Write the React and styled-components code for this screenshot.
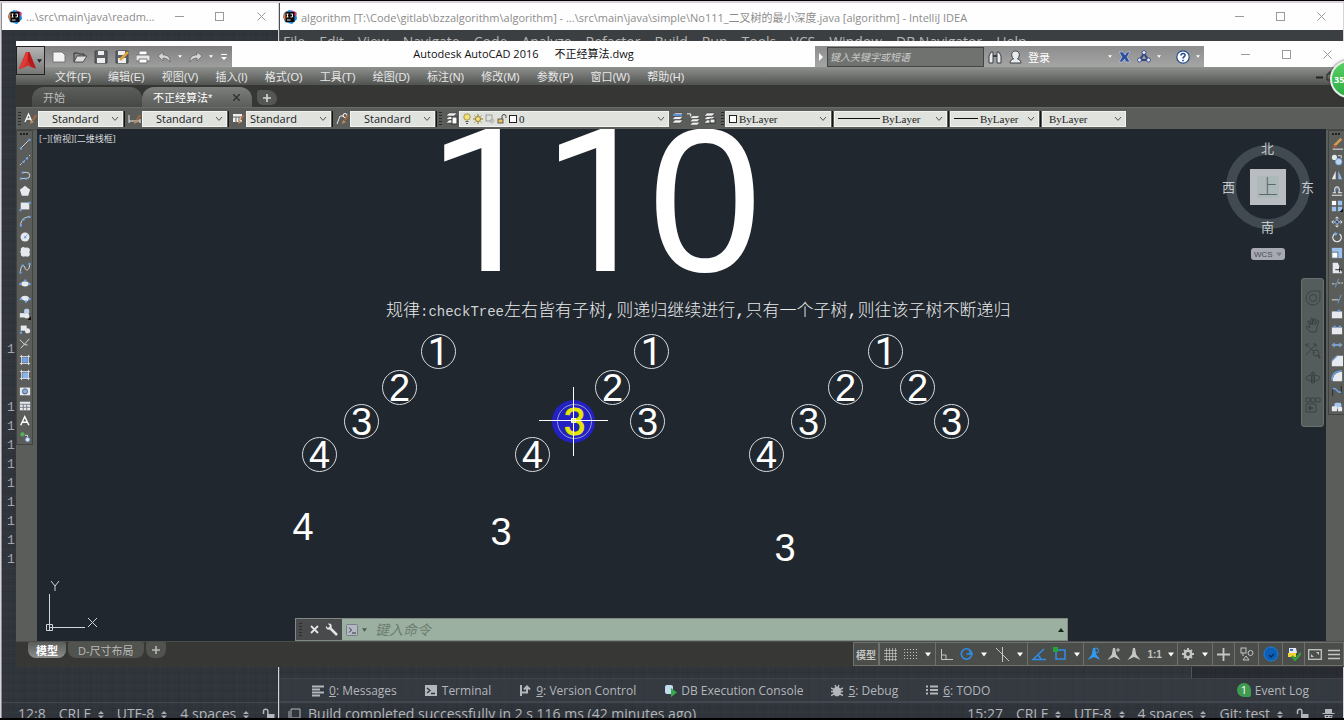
import React from 'react';
import styled, { createGlobalStyle } from 'styled-components';

const ui = '"Open Sans", "Noto Sans CJK SC", sans-serif';
const sans = '"Liberation Sans", "Noto Sans CJK SC", sans-serif';
const plainOne = 'Roboto, "Liberation Sans", sans-serif';
const serif = '"Liberation Serif", "Noto Sans CJK SC", serif';
const mono = '"Liberation Mono", "Noto Sans CJK SC", monospace';

const GlobalStyle = createGlobalStyle`
  * { box-sizing: border-box; }
  body { margin: 0; background: #000; }
  button, input, select { font: inherit; color: inherit; margin: 0; padding: 0; border: 0; background: none; border-radius: 0; }
  button { cursor: pointer; }
  svg { display: block; flex: none; }
`;

/* ---------- desktop and shared window parts ---------- */

const Desktop = styled.div`
  position: relative;
  min-height: 100vh;
  overflow: hidden;
  background: #d9d2dc;
  border-top: 1px solid #000;
  border-bottom: 2px solid #000;
  font-family: ${ui};
  font-size: 14px;
`;

const IdeWindow = styled.section`
  position: absolute;
  top: 2px;
  bottom: 0;
  left: ${(p) => p.$left}px;
  ${(p) => (p.$width ? `width: ${p.$width}px;` : 'right: 1px;')}
  display: flex;
  flex-direction: column;
  border-left: 1px solid ${(p) => (p.$width ? '#8b8d92' : '#4b4f56')};
  background-color: #30343b;
  background-image:
    repeating-linear-gradient(90deg, rgba(0, 0, 0, 0.06) 0 1px, transparent 1px 4px, rgba(120, 125, 140, 0.03) 4px 5px, transparent 5px 11px),
    repeating-linear-gradient(0deg, rgba(0, 0, 0, 0.05) 0 1px, transparent 1px 5px, rgba(120, 125, 140, 0.03) 5px 6px, transparent 6px 9px);
`;

const IdeTitleBar = styled.header`
  display: flex;
  align-items: center;
  height: 27px;
  padding: 0 1px 0 ${(p) => p.$inset}px;
  gap: 4px;
  background: #fefefe;
  color: #8c8c8c;
  font-size: 11px;
`;

const IdeTitle = styled.span`
  flex: 1;
  white-space: nowrap;
`;

const WindowButtonGroup = styled.div`
  display: flex;
  align-items: center;
`;

const WindowButton = styled.button`
  display: flex;
  align-items: center;
  justify-content: center;
  flex: none;
  width: 41px;
  height: 22px;
  color: #9a9a9a;
`;

const IdeMenuBar = styled.nav`
  display: flex;
  height: 23px;
  padding: 0 3px;
  gap: 14px;
  align-items: center;
  background: #3c3f41;
  color: #b4b6b8;
`;

const IdeBody = styled.div`
  flex: 1;
  min-height: 0;
  display: flex;
  justify-content: flex-end;
`;

const IdeSidePane = styled.aside`
  width: 152px;
  border-left: 1px solid #50555d;
  background: rgba(0, 0, 0, 0.15);
`;

const Gutter = styled.ol`
  flex: 1;
  list-style: none;
  margin: 0;
  padding: 310px 0 0 5px;
  font-family: ${mono};
  font-size: 13px;
  line-height: 19px;
  color: #a3a7ad;
  li:nth-child(2) { margin-top: 39px; }
`;

const IdeToolRow = styled.nav`
  display: flex;
  align-items: center;
  height: 24px;
  padding: 0 34px 0 32px;
  gap: 28px;
  border-top: 1px solid #3f444c;
  border-bottom: 1px solid #42474f;
  background: rgba(58, 63, 72, 0.5);
  color: #b3b6ba;
  font-size: 12px;
`;

const ToolWindowButton = styled.button`
  display: flex;
  align-items: center;
  gap: 4px;
  white-space: nowrap;
  margin-left: ${(p) => (p.$end ? 'auto' : '0')};
`;

const EventBadge = styled.span`
  width: 14px;
  height: 14px;
  border-radius: 7px 7px 2px 7px;
  background: #3f9b52;
  color: #fff;
  font-size: 11px;
  line-height: 14px;
  text-align: center;
`;

const IdeStatusBar = styled.footer`
  display: flex;
  height: 16px;
  padding: 0 8px 0 ${(p) => p.$padLeft}px;
  gap: 13px;
  align-items: flex-start;
  overflow: hidden;
  border-top: 1px solid #42474f;
  color: #b3b6ba;
`;

const StatusItem = styled.span`
  display: flex;
  align-items: center;
  gap: 7px;
  height: 22px;
  line-height: 22px;
  white-space: nowrap;
  ${(p) => p.$fill && 'flex: 1;'}
`;

/* ---------- CAD window ---------- */

const CadWindow = styled.section`
  position: absolute;
  inset: 40px 0 51px 16px;
  display: flex;
  flex-direction: column;
  background: #5b5d5a;
  color: #e8e8e8;
  font-size: 11px;
`;

const CadTitleBar = styled.header`
  display: flex;
  align-items: stretch;
  height: 26px;
  padding: 5px 0 0 29px;
  background: #fefefe;
  flex: none;
`;

const AppButton = styled.button`
  position: absolute;
  left: 0;
  top: 5px;
  width: 29px;
  height: 29px;
  display: flex;
  align-items: center;
  justify-content: center;
  gap: 1px;
  border: 1px solid #222;
  background: linear-gradient(#b4b4b4, #767876);
`;

const QuickAccess = styled.div`
  display: flex;
  align-items: center;
  width: 187px;
  padding: 0 4px 0 7px;
  justify-content: space-between;
  background: linear-gradient(#7f807f, #9d9e9d);
`;

const CadTitle = styled.h1`
  flex: 1;
  margin: 0;
  display: flex;
  justify-content: center;
  gap: 16px;
  color: #111;
  font-weight: 400;
  font-size: 11px;
  line-height: 16px;
  white-space: nowrap;
`;

const InfoCenter = styled.form`
  display: flex;
  align-items: center;
  width: 389px;
  background: linear-gradient(#8c8d8c, #a4a5a4);
  color: #fff;
`;

const InfoArrow = styled.button`
  width: 12px;
  height: 21px;
  display: flex;
  align-items: center;
  justify-content: center;
`;

const InfoInput = styled.input`
  width: 157px;
  height: 20px;
  padding: 0 2px;
  border: 1px solid #444;
  background: #707270;
  font-size: 10px;
  font-style: italic;
  &::placeholder { color: #c9cbc9; opacity: 1; }
`;

const InfoActions = styled.div`
  flex: 1;
  display: flex;
  align-items: center;
  padding: 0 4px;
  gap: 6px;
`;

const SignIn = styled.button`
  flex: 1;
  display: flex;
  align-items: center;
  gap: 5px;
`;

const IconButton = styled.button`
  display: flex;
  align-items: center;
  justify-content: center;
`;

const CadWindowButtons = styled.div`
  display: flex;
  width: 140px;
  padding-left: 21px;
  margin-top: -4px;
`;

const MenuBar = styled.nav`
  display: flex;
  align-items: center;
  height: 18px;
  flex: none;
  padding: 0 4px 0 39px;
  gap: 17px;
  background: linear-gradient(#8f918f, #515350);
  white-space: nowrap;
  font-family: ${sans};
`;

const DocControls = styled.span`
  margin-left: auto;
  padding-right: 6px;
`;

const FileTabs = styled.nav`
  display: flex;
  align-items: flex-end;
  height: 22px;
  flex: none;
  padding-left: 16px;
  background: #363735;
  font-family: ${sans};
`;

const FileTab = styled.button`
  display: flex;
  align-items: center;
  justify-content: space-between;
  width: 110px;
  height: 20px;
  padding: 0 12px 0 11px;
  border-radius: 12px 12px 0 0;
  background: ${(p) => (p.$active ? 'linear-gradient(#7d7f7c, #5b5d5a)' : 'linear-gradient(#5c5e5b, #464845)')};
  color: ${(p) => (p.$active ? '#fff' : '#bdbdbd')};
`;

const AddTab = styled.button`
  width: 20px;
  height: 15px;
  margin: 0 0 2px 5px;
  display: flex;
  align-items: center;
  justify-content: center;
  border-radius: 3px 9px 6px 6px;
  background: #555754;
  color: #d8d8d8;
`;

const PropertyBar = styled.div`
  display: flex;
  align-items: center;
  height: 22px;
  flex: none;
  padding: 0 1px;
  background: #5b5d5a;
  border-top: 1px solid #6a6c69;
`;

const Grip = styled.span`
  width: 3px;
  height: 13px;
  margin: 0 1px;
  background: repeating-linear-gradient(#2a2b2a 0 1px, transparent 1px 3px);
`;

const Divider = styled.span`
  width: 1px;
  height: 16px;
  margin: 0 1px;
  background: #151515;
`;

const StyleButton = styled.button`
  width: 16px;
  height: 16px;
  display: flex;
  align-items: center;
  justify-content: center;
`;

const Combo = styled.label`
  display: flex;
  align-items: center;
  width: ${(p) => p.$width}px;
  height: 16px;
  padding: 0 3px 0 ${(p) => p.$inset || 3}px;
  gap: 2px;
  background: #e0e2de;
  border: 1px solid #f2f3f1;
  color: #1d1d1d;
  font-family: ${(p) => (p.$serif ? serif : ui)};
  font-size: 11px;
`;

const ComboSelect = styled.select`
  appearance: none;
  flex: 1;
  min-width: 0;
  outline: none;
`;

const Swatch = styled.span`
  width: 8px;
  height: 8px;
  border: 1px solid #222;
  background: #fff;
  flex: none;
`;

const LineSample = styled.span`
  width: ${(p) => p.$width}px;
  height: 1px;
  background: #111;
  flex: none;
`;

const Spacer = styled.span`
  width: 3px;
`;

const Workspace = styled.div`
  flex: 1;
  min-height: 0;
  display: flex;
`;

const SidePanel = styled.aside`
  width: ${(p) => p.$width}px;
  padding-left: ${(p) => p.$inset}px;
  flex: none;
  overflow: hidden;
  background: #5b5d5a;
  border-top: 1px solid #484a47;
`;

const ToolStrip = styled.div`
  display: flex;
  flex-direction: column;
  align-items: center;
  justify-content: space-between;
  width: 17px;
  height: ${(p) => p.$height}px;
  padding: 2px 0 1px;
  border: 1px solid #414340;
`;

const StripGrip = styled.span`
  width: 9px;
  height: 2px;
  background: repeating-linear-gradient(90deg, #222 0 2px, transparent 2px 3px);
`;

const Canvas = styled.main`
  position: relative;
  flex: 1;
  min-width: 0;
  overflow: hidden;
  background: #20272e;
  color: #fff;
`;

const ViewLabel = styled.span`
  position: absolute;
  left: 2px;
  top: 3px;
  font-size: 9px;
  line-height: 14px;
  color: #d7d9db;
`;

const CanvasText = styled.div`
  position: absolute;
  left: ${(p) => p.$x}px;
  top: ${(p) => p.$y}px;
  transform: translate(-50%, -50%);
  font-family: ${(p) => (p.$plainOne ? plainOne : sans)};
  font-size: ${(p) => p.$size}px;
  line-height: 1;
  white-space: nowrap;
`;

const Rule = styled.p`
  position: absolute;
  left: 349px;
  top: 171px;
  margin: 0;
  font-family: ${mono};
  font-size: 17px;
  line-height: 24px;
  font-weight: 300;
  white-space: nowrap;
  color: #e8eaec;
`;

const Latin = styled.span`
  font-size: 14px;
  color: #cfd2d5;
`;

const Node = styled.div`
  position: absolute;
  left: ${(p) => p.$x - 18}px;
  top: ${(p) => p.$y - 18}px;
  width: 35px;
  height: 35px;
  border: 1px solid #d9dcde;
  border-radius: 50%;
  font-family: ${(p) => (p.children === 1 ? plainOne : sans)};
  font-size: 38px;
  line-height: 34px;
  text-align: center;
  color: ${(p) => (p.$hot ? '#e6e600' : '#fff')};
  ${(p) => p.$hot && 'background: #2222c4; box-shadow: -1px 0 0 4px #2222c4; border-color: #9c9ccf; -webkit-text-stroke: 1px #e6e600;'}
`;

const Overlay = styled.div`
  position: absolute;
  left: ${(p) => (p.$x === undefined ? 'auto' : `${p.$x}px`)};
  right: ${(p) => (p.$right === undefined ? 'auto' : `${p.$right}px`)};
  top: ${(p) => (p.$y === undefined ? 'auto' : `${p.$y}px`)};
  bottom: ${(p) => (p.$bottom === undefined ? 'auto' : `${p.$bottom}px`)};
`;

const Compass = styled.div`
  position: absolute;
  right: 16px;
  top: 16px;
  width: 84px;
  height: 84px;
  border: 10px solid #414a50;
  border-radius: 50%;
`;

const Bearing = styled.span`
  position: absolute;
  left: ${(p) => p.$x}px;
  top: ${(p) => p.$y}px;
  font-size: 13px;
  line-height: 14px;
  color: #c6c9cb;
`;

const CubeFace = styled.button`
  position: absolute;
  left: 14px;
  top: 14px;
  width: 36px;
  height: 36px;
  border: 7px solid #b9bcc0;
  background: #adb8b9;
  color: #5a676b;
  font-size: 20px;
  font-weight: 300;
  line-height: 22px;
`;

const WcsButton = styled.button`
  position: absolute;
  right: 41px;
  top: 119px;
  width: 34px;
  height: 12px;
  display: flex;
  align-items: center;
  justify-content: space-between;
  padding: 0 3px;
  border-radius: 3px;
  background: #a7aab3;
  color: #4a4d55;
  font-family: ${sans};
  font-size: 8px;
`;

const NavBar = styled.div`
  position: absolute;
  right: 2px;
  top: 149px;
  width: 23px;
  height: 149px;
  display: flex;
  flex-direction: column;
  align-items: center;
  justify-content: space-around;
  padding: 6px 0 8px;
  border: 1px solid #6a706f;
  border-radius: 3px;
  background: #555c5c;
  color: #3a4243;
`;

const CommandLine = styled.form`
  position: absolute;
  left: 258px;
  right: 258px;
  bottom: 0;
  height: 23px;
  display: flex;
  align-items: center;
  background: #9bb0a0;
  border: 1px solid #7f8a83;
`;

const CommandTools = styled.div`
  align-self: stretch;
  width: 46px;
  display: flex;
  align-items: center;
  justify-content: space-between;
  padding: 0 4px 0 2px;
  margin-right: 4px;
  background: #484a4b;
  color: #e3e3e3;
`;

const CommandInput = styled.input`
  flex: 1;
  min-width: 0;
  padding: 0 8px;
  outline: none;
  color: #26332a;
  font-size: 14px;
  font-style: italic;
  &::placeholder { color: #6c7d71; opacity: 1; }
`;

const CadStatus = styled.footer`
  display: flex;
  align-items: stretch;
  justify-content: space-between;
  height: 26px;
  flex: none;
  background: #373835;
  border-top: 1px solid #4c4e4b;
`;

const LayoutTabs = styled.nav`
  display: flex;
  align-items: flex-start;
  padding-left: 12px;
  gap: 2px;
`;

const LayoutTab = styled.button`
  height: 16px;
  padding: 0 ${(p) => p.$pad || 10}px;
  display: flex;
  align-items: center;
  border-radius: 2px 2px 8px 8px;
  background: ${(p) => (p.$active ? 'linear-gradient(#5b5d5a, #8b8d8a)' : '#51534f')};
  color: ${(p) => (p.$active ? '#fff' : '#b9bab8')};
  font-weight: ${(p) => (p.$active ? 600 : 400)};
`;

const StatusTools = styled.div`
  display: flex;
  width: 491px;
  margin-bottom: 1px;
`;

const StatusCell = styled.div`
  display: flex;
  align-items: center;
  justify-content: space-around;
  width: ${(p) => p.$width}px;
  flex: none;
  border: 1px solid #6f716e;
  border-left-width: ${(p) => (p.$joined ? 0 : 1)}px;
  background: #4b4d4a;
  color: #c4c6c3;
  font-family: ${sans};
  font-weight: ${(p) => (p.$bold ? 700 : 400)};
  font-size: 10px;
  white-space: nowrap;
`;

const RecorderBadge = styled.button`
  position: absolute;
  right: -24px;
  top: 59px;
  width: 38px;
  height: 38px;
  border: 2px solid #e6efe6;
  border-radius: 50%;
  background: linear-gradient(#58cf63, #2fae45);
  color: #fff;
  font-size: 9px;
  font-weight: 700;
  text-align: left;
  padding-left: 2px;
  box-shadow: 0 0 3px #333;
`;

/* ---------- icons ---------- */

const Svg = ({ w = 14, h = 14, vw, vh, children }) => (
  <svg width={w} height={h} viewBox={`0 0 ${vw || w} ${vh || h}`} fill="none" stroke="currentColor" aria-hidden="true">
    {children}
  </svg>
);

const Caret = ({ color = '#fff', size = 5 }) => (
  <svg width={size} height={size - 1} viewBox="0 0 6 4" aria-hidden="true"><path d="M0 0h6L3 4z" fill={color} /></svg>
);

const Chevron = () => (
  <Svg w={8} h={6}><path d="M1 1l3 3.4L7 1" stroke="#555" /></Svg>
);

const Updown = () => (
  <Svg w={6} h={9}><path d="M0 4L3 1l3 3zM0 5.500l3 3 3-3z" fill="#a9acb0" stroke="none" /></Svg>
);

const Plus = () => (
  <Svg w={8} h={8}><path d="M4 0v8M0 4h8" strokeWidth="1.600" /></Svg>
);

const IdeaLogo = () => (
  <svg width="14" height="14" viewBox="0 0 14 14" aria-hidden="true">
    <path d="M1 3L6 0l7 2 1 7-5 5-7-2-2-5z" fill="#1a87d8" />
    <path d="M0 7l3-6 5 3-4 9z" fill="#f0752a" />
    <path d="M8 0l6 3-2 4z" fill="#d93a78" />
    <rect x="2.500" y="2" width="9" height="10" fill="#0b0b0b" />
    <path d="M3.500 4h2M4.500 4v3M3.500 7h2M7.500 4h2v3h-2M4 10h3.500" stroke="#fff" strokeWidth=".9" fill="none" />
  </svg>
);

const Minimize = () => <Svg w={9} h={9}><path d="M0 4.500h9" /></Svg>;
const Maximize = () => <Svg w={10} h={10}><rect x=".5" y=".5" width="8" height="8" /></Svg>;
const Close = () => <Svg w={9} h={9}><path d="M.5.5l8 8M8.500.5l-8 8" /></Svg>;

const WindowButtons = () => (
  <WindowButtonGroup>
    <WindowButton type="button" aria-label="Minimize"><Minimize /></WindowButton>
    <WindowButton type="button" aria-label="Maximize"><Maximize /></WindowButton>
    <WindowButton type="button" aria-label="Close"><Close /></WindowButton>
  </WindowButtonGroup>
);

const Padlock = () => (
  <Svg w={13} h={13}>
    <path d="M1.500 6V3.500a2.200 2.200 0 0 1 4.400 0V6" strokeWidth="1.500" />
    <rect x="5" y="6" width="7.500" height="6" fill="#b3b6ba" stroke="none" />
  </Svg>
);

const Inspector = () => (
  <Svg w={13} h={13}>
    <path d="M3 5V1h7v4h2.500v1H.5V5zM2.500 7h8c0 4-2 6-4 6s-4-2-4-6z" fill="#b3b6ba" stroke="none" />
    <path d="M4 8.500h2M7.500 8.500h2" stroke="#2f343d" />
  </Svg>
);

const toolGlyphs = {
  messages: <path d="M0 2.500h12M0 5.500h8M0 8.500h12M0 11.500h8" strokeWidth="2" />,
  terminal: <><rect x="0" y="1" width="12" height="11" fill="#b3b6ba" stroke="none" /><path d="M2 4l3 2.500L2 9M6 9.500h4" stroke="#2f343d" strokeWidth="1.300" /></>,
  vcs: <path d="M2 1v11M2 8.500h6V3M5 5.500L8 2.500 11 5.500" strokeWidth="2" />,
  db: <><rect x="1" y="1" width="8" height="9" rx="2" fill="#c3dbef" stroke="none" /><path d="M7 4l6 4.500-6 4.500z" fill="#35a94b" stroke="none" /></>,
  debug: <><ellipse cx="6" cy="7.500" rx="4" ry="5" fill="#b3b6ba" stroke="none" /><path d="M0 4l3 1.500M12 4L9 5.500M0 7.500h12M0 11.500L3 10M12 11.500L9 10M4 1l1 2M8 1L7 3" strokeWidth="1.400" /></>,
  todo: <path d="M0 2.500h2M4 2.500h8M0 6h2M4 6h8M0 9.500h2M4 9.500h8" strokeWidth="1.800" />,
};

const W = '#e6e9ee';
const B = '#6ea4ea';

const Dots = ({ at }) => at.map(([x, y]) => (
  <rect key={`${x}-${y}`} x={x - 1} y={y - 1} width="2.500" height="2.500" fill={B} stroke="none" />
));

const drawTools = [
  ['Line', <><path d="M2.500 11.500l9-9" stroke={W} /><Dots at={[[2, 12], [12, 2]]} /></>],
  ['Construction line', <><path d="M1 13L13 1" stroke={W} strokeDasharray="3 2" /><Dots at={[[5, 9], [9, 5]]} /></>],
  ['Polyline', <><path d="M2 11h6M4 4h5a3 3 0 0 1 0 7" stroke={W} /><Dots at={[[2, 11], [8, 11], [4, 4]]} /></>],
  ['Polygon', <path d="M7 1l6 4.600-2.300 7H3.300L1 5.600z" fill={W} stroke="none" />],
  ['Rectangle', <><rect x="2" y="3" width="10" height="8" fill={W} stroke="none" /><Dots at={[[1.500, 11.500], [12, 3]]} /></>],
  ['Arc', <><path d="M2 12C2 6 6 2.500 12 2" stroke={W} /><Dots at={[[2, 12], [5, 5], [12, 2]]} /></>],
  ['Circle', <><circle cx="7" cy="7" r="5.200" fill={W} stroke="none" /><path d="M7 7l3-3" stroke={B} /><Dots at={[[7, 7]]} /></>],
  ['Revision cloud', <path d="M3 2q2-1.500 4 0 3-1 5 1 1.500 2 0 4 1.500 3-.5 5-2 1-4 0-2 1-4 0-2-1-1-3-2-3 0-4-1-2 .5-3z" fill={W} stroke="none" />],
  ['Spline', <><path d="M1.500 11C3 2 6 3 7 7s5 3 5.500-4" stroke={W} /><Dots at={[[1.500, 12], [4, 4], [12, 2]]} /></>],
  ['Ellipse', <><ellipse cx="7" cy="8" rx="4.500" ry="3" fill={W} stroke="none" /><Dots at={[[1.500, 8], [12, 8], [7, 4]]} /></>],
  ['Ellipse arc', <><path d="M2 8c0-5 10-5 10 0-1 3-4 3-4 3z" fill={W} stroke="none" /><Dots at={[[2, 8], [12, 8], [8, 11]]} /></>],
  ['Insert block', <><rect x="1" y="6" width="6" height="5" fill={W} stroke="none" /><rect x="6" y="1" width="6" height="6" rx="2" fill="#b9cfe9" stroke="none" /><circle cx="9" cy="9" r="3" fill={W} stroke="none" /><path d="M14 10v4h-4z" fill="#111" stroke="none" /></>],
  ['Create block', <><rect x="2" y="3" width="7" height="6" fill={W} stroke="none" /><circle cx="10" cy="9" r="3" fill={W} stroke="none" /><Dots at={[[2, 11]]} /></>],
  ['Point', <path d="M1 2l6 6M12 1L2 12M7 8h3" stroke={W} />],
  ['Hatch', <><rect x="4" y="4" width="6" height="6" fill={B} stroke="none" /><path d="M1 3h12M1 11h12M3 1v12M11 1v12" stroke={W} /></>],
  ['Gradient', <><rect x="4" y="4" width="7" height="7" fill="#88b4ee" stroke="none" /><path d="M1 3h12M1 11h12M3 1v12M11 1v12" stroke={W} /></>],
  ['Region', <><rect x="1" y="3" width="12" height="9" fill={W} stroke="none" /><circle cx="7" cy="7.500" r="3" fill="#86aede" stroke="#46566a" /></>],
  ['Table', <><rect x="1" y="2" width="12" height="10" fill={W} stroke="none" /><path d="M1 5h12M1 8.500h12M5 5v7M9 5v7" stroke="#6a6f78" /></>],
  ['Text', <path d="M2 12L6.700 2 11.500 12M4 8.500h6" stroke="#fff" strokeWidth="1.700" />],
  ['Add selected', <><circle cx="4" cy="4" r="2.500" fill="#53b552" stroke="none" /><circle cx="10" cy="10" r="2.500" fill={W} stroke={B} /><path d="M7 5h3v2" stroke={W} /></>],
];

const modifyTools = [
  ['Erase', <><path d="M4 9L12 1" stroke="#d79b50" strokeWidth="3" /><path d="M1 12l4-4 2 2z" fill="#cf5730" stroke="none" /><path d="M2 13h12" stroke="#fff" /></>],
  ['Copy', <><circle cx="4" cy="4" r="3" fill={W} stroke="none" /><circle cx="9" cy="9" r="3.800" fill="#bcd4f0" stroke={B} /><path d="M8 2h4v3" stroke={W} /></>],
  ['Mirror', <><path d="M5.500 2v10H1z" fill={W} stroke="none" /><path d="M8.500 2v10H13z" fill="#8fb8ea" stroke="none" /></>],
  ['Offset', <><path d="M1 12h12M2 9h3c-4-9 8-9 4 0h4" stroke={W} strokeWidth="1.300" /><path d="M5 8c-1-5 5-5 4 0" stroke={B} /></>],
  ['Array', <><path d="M1 1h5v5H1z" fill="#fff" stroke="none" /><path d="M8 1h5v5H8zM1 8h5v5H1zM8 8h5v5H8z" fill="#9dc1ef" stroke="none" /><path d="M14 10v4h-4z" fill="#111" stroke="none" /></>],
  ['Move', <><path d="M7 1v12M1 7h12M5 3l2-2 2 2M5 11l2 2 2-2M3 5L1 7l2 2M11 5l2 2-2 2" stroke={W} /><rect x="5.500" y="5.500" width="3" height="3" fill="#333" stroke={B} /></>],
  ['Rotate', <><path d="M5 3a5 5 0 1 0 5 .5" stroke={W} strokeWidth="1.400" /><path d="M4 1l4 2-3 3z" fill={B} stroke="none" /></>],
  ['Scale', <><rect x="1" y="1" width="12" height="12" fill="#9dc1ef" stroke="none" /><rect x="1" y="6" width="7" height="7" fill="#fff" stroke="#567" /></>],
  ['Stretch', <><path d="M2 1h6l5 12H2z" fill={W} stroke="none" /><path d="M5 9h8M10 6v6" stroke="#111" /></>],
  ['Trim', <><path d="M1 8h5M8 7h6" stroke={W} strokeDasharray="3 1" /><path d="M5 12l4-10" stroke={B} /></>],
  ['Extend', <><path d="M1 8h8" stroke={W} /><path d="M8 12l4-10" stroke={B} /></>],
  ['Break at point', <><rect x="1" y="4" width="12" height="8" fill={W} stroke="none" /><Dots at={[[9, 3]]} /></>],
  ['Break', <><rect x="1" y="4" width="12" height="8" fill={W} stroke="none" /><Dots at={[[4, 3], [10, 3]]} /></>],
  ['Join', <><path d="M1 7h12" stroke={W} /><path d="M3 4.500L6 7 3 9.500M11 4.500L8 7l3 2.500" fill={B} stroke={B} /></>],
  ['Chamfer', <><path d="M1 13V7l6-6h7v12z" fill={W} stroke="none" /><path d="M1 7l6-6" stroke={B} strokeWidth="1.500" /></>],
  ['Fillet', <><path d="M2 13C2 6 6 2 13 2v11z" fill={W} stroke="none" /><path d="M1 12C1 5 5 1 13 1" stroke={B} strokeWidth="1.500" /></>],
  ['Blend curves', <><path d="M2 13V4M12 1v9" stroke="#222" /><path d="M2 5c4-4 5 6 10 3" stroke={B} strokeWidth="1.500" /></>],
  ['Explode', <><rect x="4" y="2" width="8" height="7" rx="2" fill="#a9c7ee" stroke="none" /><rect x="1" y="6" width="6" height="6" rx="1" fill={W} stroke="none" /><rect x="8" y="7" width="5" height="5" rx="1" fill={W} stroke="none" /></>],
];

const quickTools = [
  ['New', <path d="M1 2h9l3 3v7H1z" fill="#f2f2f2" stroke="#666" strokeWidth=".8" />],
  ['Open', <><path d="M1 12V3h4l1 1h5v2" stroke="#333" /><path d="M1 12l3-6h10l-4 6z" fill="#e0e0e0" stroke="#333" strokeWidth=".8" /></>],
  ['Save', <><path d="M1 1h12v12H1z" fill="#5c6166" stroke="#43484d" /><path d="M4 1h6v4H4zM3 8h8v5H3z" fill="#eee" stroke="none" /></>],
  ['Save as', <><path d="M1 1h12v12H1z" fill="#5c6166" stroke="#43484d" /><path d="M3 1h7v4H3zM3 8h8v5H3z" fill="#eee" stroke="none" /><path d="M5 10l8-8" stroke="#e0a33a" strokeWidth="2.500" /></>],
  ['Plot', <><path d="M3 1h8v4H3z" fill="#fff" stroke="#777" /><path d="M0 5h14v6H0z" fill="#e6e6e6" stroke="#777" /><path d="M3 9h8v4H3z" fill="#fff" stroke="#777" /></>],
];

const pencil = <><path d="M9 8l3-5" stroke="#a5673c" strokeWidth="2" /><path d="M6 12l1-4 3 2z" fill="#c98a55" stroke="none" /></>;
const styleGlyphs = {
  text: <><path d="M1 10L4.500 2 8 10M2.500 7h4" stroke="#fff" strokeWidth="1.300" />{pencil}</>,
  dim: <><path d="M1 3v8M12 7v4M1 9h11" stroke="#e8e8e8" />{pencil}</>,
  table: <><path d="M1 2h9v8H1z" fill="#eee" stroke="none" /><path d="M1 5h9M4 5v5M7 5v5" stroke="#666" />{pencil}</>,
  leader: <><path d="M1 12L4 4h4" stroke="#e8e8e8" /><circle cx="9" cy="3.500" r="2" stroke="#fff" />{pencil}</>,
};

const layerStack = (extra) => (
  <><path d="M4 1h8L9 4H1zM4 4.500h8L9 7.500H1zM4 8h8l-3 3H1z" fill="#f0f0f0" stroke="#333" strokeWidth=".5" />{extra}</>
);

const navGlyphs = {
  wheel: <><circle cx="8" cy="8" r="3.500" /><path d="M1 8a7 7 0 0 1 7-7h7v7a7 7 0 0 1-14 0z" /></>,
  pan: <path d="M5 15l-4-5 1-1 3 2-2-7h1.500L6 8V1.500h1.500V8L9 2h1.500L10 8l2.500-4.500L14 4l-2 6-1 5z" />,
  zoom: <><path d="M1 1l9 9M11 1L1 12M1 4V1h3M8 1h3v3" /><circle cx="11" cy="10" r="3" /><path d="M13 12l2 3" strokeWidth="2" /></>,
  orbit: <><ellipse cx="8" cy="8" rx="7" ry="3" /><path d="M8 14V2M6 4l2-2.500L10 4M6.500 5v8M9.500 5v8" /></>,
  motion: <><path d="M1 1h4v4H1zM6 1h4v4H6zM11 1h4v4h-4zM1 7h10v8H1z" /><path d="M4 9l4 2-4 2z" fill="currentColor" /></>,
};

const person = (extra) => (
  <><path d="M6 1h2l1.200 6.500L13.500 13 7 10 .5 13l4.300-5.500z" fill="currentColor" stroke="none" />{extra}</>
);

/* ---------- content ---------- */

const ideMenus = ['File', 'Edit', 'View', 'Navigate', 'Code', 'Analyze', 'Refactor', 'Build', 'Run', 'Tools', 'VCS', 'Window', 'DB Navigator', 'Help'];
const cadMenus = ['文件(F)', '编辑(E)', '视图(V)', '插入(I)', '格式(O)', '工具(T)', '绘图(D)', '标注(N)', '修改(M)', '参数(P)', '窗口(W)', '帮助(H)'];

const toolWindows = [
  ['messages', '0', 'Messages'],
  ['terminal', '', 'Terminal'],
  ['vcs', '9', 'Version Control'],
  ['db', '', 'DB Execution Console'],
  ['debug', '5', 'Debug'],
  ['todo', '6', 'TODO'],
];

const nodes = [
  [402, 223, 1], [363, 259, 2], [325, 293, 3], [283, 326, 4],
  [615, 223, 1], [576, 259, 2], [611, 293, 3], [496, 326, 4],
  [849, 223, 1], [809, 259, 2], [881, 259, 2], [772, 293, 3], [915, 293, 3], [730, 326, 4],
];

const Select = ({ label, value, width, inset, serifText, before }) => (
  <Combo $width={width} $inset={inset} $serif={serifText}>
    {before}
    <ComboSelect aria-label={label} defaultValue={value}>
      <option>{value}</option>
    </ComboSelect>
    <Chevron />
  </Combo>
);

const Encoding = () => (
  <>
    <StatusItem>CRLF <Updown /></StatusItem>
    <StatusItem>UTF-8 <Updown /></StatusItem>
    <StatusItem>4 spaces <Updown /></StatusItem>
  </>
);

const ReadmeWindow = () => (
  <IdeWindow $left={1} $width={277}>
    <IdeTitleBar $inset={6}>
      <IdeaLogo />
      <IdeTitle>...\src\main\java\readm...</IdeTitle>
      <WindowButtons />
    </IdeTitleBar>
    <IdeBody>
      <Gutter>{Array.from({ length: 10 }, (_, i) => <li key={i}>1</li>)}</Gutter>
    </IdeBody>
    <IdeStatusBar $padLeft={16}>
      <StatusItem>12:8</StatusItem>
      <Encoding />
      <StatusItem><Padlock /></StatusItem>
    </IdeStatusBar>
  </IdeWindow>
);

const ProjectWindow = () => (
  <IdeWindow $left={279}>
    <IdeTitleBar $inset={3}>
      <IdeaLogo />
      <IdeTitle>algorithm [T:\Code\gitlab\bzzalgorithm\algorithm] - ...\src\main\java\simple\No111_二叉树的最小深度.java [algorithm] - IntelliJ IDEA</IdeTitle>
      <WindowButtons />
    </IdeTitleBar>
    <IdeMenuBar>{ideMenus.map((m) => <button key={m}>{m}</button>)}</IdeMenuBar>
    <IdeBody><IdeSidePane /></IdeBody>
    <IdeToolRow>
      {toolWindows.map(([icon, key, name]) => (
        <ToolWindowButton key={name}>
          <Svg w={13} h={13}>{toolGlyphs[icon]}</Svg>
          <span>{key && <><u>{key}</u>: </>}{name}</span>
        </ToolWindowButton>
      ))}
      <ToolWindowButton $end><EventBadge>1</EventBadge>Event Log</ToolWindowButton>
    </IdeToolRow>
    <IdeStatusBar $padLeft={8}>
      <StatusItem $fill>
        <Svg w={13} h={13}><path d="M3 1h9v9H3zM1 3v9h9" /></Svg>
        Build completed successfully in 2 s 116 ms (42 minutes ago)
      </StatusItem>
      <StatusItem>15:27</StatusItem>
      <Encoding />
      <StatusItem>Git: test <Updown /></StatusItem>
      <StatusItem><Padlock /></StatusItem>
      <StatusItem><Inspector /></StatusItem>
    </IdeStatusBar>
  </IdeWindow>
);

const TitleBar = () => (
  <CadTitleBar>
    <AppButton aria-label="Application menu">
      <Svg w={17} h={18}>
        <path d="M7 0h3.500L17 16.500 12 15 8.500 8.500 5 15.500 0 17z" fill="#b81a1a" stroke="none" />
        <path d="M7 0h2L8.500 8.500 5 15.500 0 17z" fill="#e23a34" stroke="none" />
        <path d="M8.500 8.500l3.500 6.500-3.500-1.500L5 15.500z" fill="#d32a28" stroke="none" />
      </Svg>
      <Caret color="#222" />
    </AppButton>
    <QuickAccess>
      {quickTools.map(([name, glyph]) => (
        <IconButton key={name} aria-label={name}><Svg>{glyph}</Svg></IconButton>
      ))}
      <IconButton aria-label="Undo"><Svg w={13} h={12}><path d="M0 5l5-4v3c5 0 7 2 7 7-2-3-4-4-7-4v3z" fill="#d5d7d9" stroke="#555" strokeWidth=".6" /></Svg></IconButton>
      <Caret size={4} />
      <IconButton aria-label="Redo"><Svg w={13} h={12}><path d="M13 5L8 1v3C3 4 1 6 1 11c2-3 4-4 7-4v3z" fill="#d5d7d9" stroke="#555" strokeWidth=".6" /></Svg></IconButton>
      <Caret size={4} />
      <IconButton aria-label="Customize"><Svg w={8} h={8}><path d="M1 1.500h6" stroke="#fff" /><path d="M1 4h6L4 7z" fill="#fff" stroke="none" /></Svg></IconButton>
    </QuickAccess>
    <CadTitle><span>Autodesk AutoCAD 2016</span><span>不正经算法.dwg</span></CadTitle>
    <InfoCenter>
      <InfoArrow type="button" aria-label="Collapse search"><Svg w={5} h={8}><path d="M0 0l4 4-4 4z" fill="#fff" stroke="none" /></Svg></InfoArrow>
      <InfoInput aria-label="Search" placeholder="键入关键字或短语" />
      <InfoActions>
        <IconButton type="button" aria-label="Find"><Svg><path d="M1 13V6l2-4h2v11zM13 13V6l-2-4H9v11z" fill="#e9ecef" stroke="#3b3f44" /><path d="M5 6h4" stroke="#3b3f44" strokeWidth="2" /></Svg></IconButton>
        <SignIn type="button"><Svg w={15}><path d="M2 13c0-3 2-3.500 3.500-4C2 5 4 1 7.500 1s5.500 4 2 8c1.500.5 3.500 1 3.500 4z" fill="#e9ecef" stroke="#3b3f44" /></Svg>登录</SignIn>
        <Caret size={4} />
        <IconButton type="button" aria-label="Exchange"><Svg w={13} h={12}><path d="M1 1h4l2 3 2-3h3L9 6l3 5H8L6.500 8 4 11H1l3-5z" fill="#2c4d9b" stroke="#b9c8ec" strokeWidth=".7" /></Svg></IconButton>
        <IconButton type="button" aria-label="Stay connected"><Svg w={14} h={13}><path d="M7 3L3 10h8z" stroke="#2e447e" strokeWidth="2" /><g fill="#dfe6f5" stroke="#2e447e" strokeWidth=".8"><circle cx="7" cy="2.500" r="2" /><circle cx="2.500" cy="10" r="2" /><circle cx="11.500" cy="10" r="2" /></g></Svg></IconButton>
        <Caret size={4} />
        <Spacer />
        <IconButton type="button" aria-label="Help"><Svg><circle cx="7" cy="7" r="6.200" fill="#fff" stroke="#234a8c" strokeWidth="1.200" /><path d="M5 5.500c0-3 4.500-2.500 4 0-.3 1.200-2 1.200-2 3M7 9.800v1.500" stroke="#234a8c" strokeWidth="1.600" /></Svg></IconButton>
        <Caret size={4} />
      </InfoActions>
    </InfoCenter>
    <CadWindowButtons><WindowButtons /></CadWindowButtons>
  </CadTitleBar>
);

const Properties = () => (
  <PropertyBar>
    <Grip />
    <StyleButton aria-label="Text style"><Svg w={13} h={13}>{styleGlyphs.text}</Svg></StyleButton>
    <Select label="Text style" value="Standard" width={85} inset={13} />
    <Divider />
    <StyleButton aria-label="Dimension style"><Svg w={13} h={13}>{styleGlyphs.dim}</Svg></StyleButton>
    <Select label="Dimension style" value="Standard" width={85} inset={13} />
    <Divider />
    <StyleButton aria-label="Table style"><Svg w={13} h={13}>{styleGlyphs.table}</Svg></StyleButton>
    <Select label="Table style" value="Standard" width={85} />
    <Divider />
    <StyleButton aria-label="Multileader style"><Svg w={13} h={13}>{styleGlyphs.leader}</Svg></StyleButton>
    <Select label="Multileader style" value="Standard" width={85} inset={13} />
    <Divider />
    <Grip />
    <StyleButton aria-label="Layer properties"><Svg w={13} h={13}>{layerStack(<rect x="7" y="5" width="5" height="7" fill="#fff" stroke="#333" />)}</Svg></StyleButton>
    <Select
      label="Layer"
      value="0"
      width={210}
      serifText
      before={(
        <>
          <Svg w={8} h={12}><circle cx="4" cy="4" r="3.200" fill="#f6e27a" stroke="#8d7a2b" strokeWidth=".7" /><path d="M2.500 8.500h3M3 10.500h2" stroke="#555" /></Svg>
          <Svg w={10} h={10}><circle cx="5" cy="5" r="2.500" fill="#f6e27a" stroke="#8d7a2b" /><path d="M5 0v2M5 8v2M0 5h2M8 5h2M1.500 1.500l1 1M8.500 1.500l-1 1M1.500 8.500l1-1M8.500 8.500l-1-1" stroke="#8d7a2b" /></Svg>
          <Svg w={10} h={10}><rect x="1" y="1" width="6" height="6" stroke="#9a9c99" /><circle cx="7" cy="7" r="2" stroke="#b0b2af" /></Svg>
          <Svg w={10} h={10}><rect x="1" y="5" width="5" height="4" fill="#e8c25a" stroke="#444" strokeWidth=".8" /><path d="M5 5V2.500a2 2 0 0 1 4 0V4" stroke="#444" /></Svg>
          <Swatch />
        </>
      )}
    />
    <StyleButton aria-label="Make layer current"><Svg w={13} h={13}>{layerStack(<path d="M2 3h9" stroke="#5d8fd6" strokeWidth="2" />)}</Svg></StyleButton>
    <StyleButton aria-label="Previous layer"><Svg w={13} h={13} vw={14} vh={14}><g transform="translate(2 3)">{layerStack(<path d="M-2-1h4v3" stroke="#fff" />)}</g></Svg></StyleButton>
    <StyleButton aria-label="Layer states"><Svg w={13} h={13}>{layerStack(<rect x="7" y="7" width="5" height="4" fill="#eee" stroke="#333" />)}</Svg></StyleButton>
    <Spacer />
    <Grip />
    <Select label="Color" value="ByLayer" width={106} serifText before={<Swatch />} />
    <Divider />
    <Select label="Linetype" value="ByLayer" width={113} serifText before={<LineSample $width={42} />} />
    <Divider />
    <Select label="Lineweight" value="ByLayer" width={89} serifText before={<LineSample $width={24} />} />
    <Divider />
    <Select label="Plot style" value="ByLayer" width={84} inset={6} serifText />
  </PropertyBar>
);

const Tools = ({ items, height }) => (
  <ToolStrip $height={height}>
    <StripGrip />
    {items.map(([name, glyph]) => (
      <IconButton key={name} aria-label={name}><Svg w={12} h={12} vw={14} vh={14}>{glyph}</Svg></IconButton>
    ))}
  </ToolStrip>
);

const Drawing = () => (
  <Canvas>
    <CanvasText $x={505} $y={73} $size={204} $plainOne>11</CanvasText>
    <CanvasText $x={668} $y={71} $size={204}>0</CanvasText>
    <ViewLabel>[−][俯视][二维线框]</ViewLabel>
    <Rule>
      规律<Latin>:checkTree</Latin>左右皆有子树,则递归继续进行,只有一个子树,则往该子树不断递归
    </Rule>
    {nodes.map(([x, y, n]) => <Node key={`${x}-${y}`} $x={x} $y={y}>{n}</Node>)}
    <Node $x={538} $y={293} $hot>3</Node>
    <CanvasText $x={266} $y={398} $size={38}>4</CanvasText>
    <CanvasText $x={464} $y={403} $size={38}>3</CanvasText>
    <CanvasText $x={748} $y={419} $size={38}>3</CanvasText>
    <Overlay $x={502} $y={258}>
      <Svg w={69} h={69}><path d="M0 33.500h69M34.500 0v69M32.500 31.500h4v4h-4z" stroke="#fff" /></Svg>
    </Overlay>
    <Overlay $x={8} $bottom={8}>
      <Svg w={54} h={54}><path d="M4.500 15v36M4.500 48.500H40M1.500 45.500h6v6h-6zM6 2l4 5 4-5M10 7v5M43 39l9 9M52 39l-9 9" stroke="#cfd5da" /></Svg>
    </Overlay>
    <Compass>
      <Bearing $x={25} $y={-14}>北</Bearing>
      <Bearing $x={25} $y={65}>南</Bearing>
      <Bearing $x={-14} $y={25}>西</Bearing>
      <Bearing $x={65} $y={25}>东</Bearing>
      <CubeFace>上</CubeFace>
    </Compass>
    <WcsButton>WCS <Caret color="#7d8088" size={6} /></WcsButton>
    <NavBar>
      {Object.entries(navGlyphs).map(([name, glyph]) => (
        <IconButton key={name} aria-label={name}><Svg w={16} h={16}>{glyph}</Svg></IconButton>
      ))}
    </NavBar>
    <CommandLine>
      <CommandTools>
        <Grip />
        <IconButton type="button" aria-label="Close"><Svg w={9} h={9}><path d="M1 1l7 7M8 1L1 8" strokeWidth="1.800" /></Svg></IconButton>
        <IconButton type="button" aria-label="Customize"><Svg w={13} h={13}><path d="M5 5l7 7" strokeWidth="2.500" /><path d="M1 3l2 2 2-2-2-2.200C6-.5 8 3 6 5.500 4 8 0 6 1 3z" fill="currentColor" stroke="none" /></Svg></IconButton>
      </CommandTools>
      <Svg w={13} h={12}><rect x=".5" y=".5" width="11" height="11" rx="1" fill="#b4b9c4" stroke="#73808a" /><path d="M3 3.500l2.500 2.500L3 8.500M6 9h4" stroke="#333" /></Svg>
      <Spacer />
      <Caret color="#4c5a51" />
      <CommandInput aria-label="Command" placeholder="键入命令" />
      <Overlay $right={3} $y={9}><Svg w={6} h={4}><path d="M0 4h6L3 0z" fill="#16251a" stroke="none" /></Svg></Overlay>
    </CommandLine>
  </Canvas>
);

const StatusBar = () => (
  <CadStatus>
    <LayoutTabs>
      <LayoutTab $active $pad={8}>模型</LayoutTab>
      <LayoutTab>D-尺寸布局</LayoutTab>
      <LayoutTab $pad={6} aria-label="New layout"><Plus /></LayoutTab>
    </LayoutTabs>
    <StatusTools>
      <StatusCell $width={26} $bold>模型</StatusCell>
      <StatusCell $width={57}>
        <Svg w={13} h={13}><path d="M2.500 0v13M5.500 0v13M8.500 0v13M11.500 0v13M0 2.500h13M0 5.500h13M0 8.500h13M0 11.500h13" opacity=".7" /></Svg>
        <Svg w={13} h={13}><path d="M0 1.500h13M0 4.500h13M0 7.500h13M0 10.500h13" strokeDasharray="1 2" /></Svg>
        <Caret size={6} />
      </StatusCell>
      <StatusCell $width={92} $joined>
        <Svg w={13} h={13}><path d="M1.500 1v10.500H13M2 7h4v4" /></Svg>
        <Svg w={14} h={14}><g stroke="#2f8de6" strokeWidth="1.600"><circle cx="6.500" cy="7" r="5.200" /><path d="M6.500 7H13M10 3.500V7" /></g></Svg>
        <Caret size={6} />
        <Svg w={15} h={15}><path d="M1 1l13 13M7.500 0v15" /></Svg>
        <Caret size={6} />
      </StatusCell>
      <StatusCell $width={56} $joined>
        <Svg w={15} h={13}><path d="M13 1L2 11.500h13M7 7l3 4" stroke="#2f8de6" strokeWidth="1.500" /></Svg>
        <Svg w={14} h={14}><rect x="3" y="3" width="9" height="9" stroke="#2f8de6" strokeWidth="1.500" /><rect x="0" y="0" width="5" height="5" fill="#25a33b" stroke="none" /></Svg>
        <Caret size={6} />
      </StatusCell>
      <StatusCell $width={94} $joined $bold>
        <Svg w={14} h={14}><g color="#2f9bf6" stroke="#2f9bf6">{person(<circle cx="9" cy="3.500" r="2.500" />)}</g></Svg>
        <Svg w={14} h={14}>{person(<path d="M9 3h4M11 1v4" />)}</Svg>
        <Svg w={14} h={14}>{person()}</Svg>
        <span>1:1</span>
        <Caret size={6} />
      </StatusCell>
      <StatusCell $width={35} $joined>
        <Svg w={12} h={12}><circle cx="6" cy="6" r="3.200" strokeWidth="2.500" /><path d="M6 0v2M6 10v2M0 6h2M10 6h2M2 2l1.500 1.500M8.500 8.500L10 10M10 2L8.500 3.500M3.500 8.500L2 10" strokeWidth="1.800" /></Svg>
        <Caret size={6} />
      </StatusCell>
      <StatusCell $width={22} $joined><Svg w={13} h={13}><path d="M6.500 0v13M0 6.500h13" strokeWidth="1.800" /></Svg></StatusCell>
      <StatusCell $width={24} $joined><Svg w={14} h={14}><rect x="1" y="1" width="5" height="5" /><circle cx="10.500" cy="6" r="2.500" /><path d="M6 9l3 4H3zM3 6v3" /></Svg></StatusCell>
      <StatusCell $width={24} $joined><Svg w={16} h={16}><circle cx="8" cy="8" r="7" fill="#0c5fb5" stroke="#1b7fe0" /><path d="M6 9l2 2 3-3" stroke="#0a2f5c" strokeWidth="1.500" /></Svg></StatusCell>
      <StatusCell $width={22} $joined><Svg w={14} h={14}><path d="M2 1h7l1 5H2z" fill="#e8e8f4" stroke="none" /><path d="M1 6h8v4H1z" fill="#ecd232" stroke="none" /><path d="M5 9l3 4 6-7" stroke="#2fa23f" strokeWidth="2.200" /><path d="M3 3h3" stroke="#3b70c9" strokeWidth="2" /></Svg></StatusCell>
      <StatusCell $width={39} $joined>
        <Svg w={14} h={11}><rect x=".7" y=".7" width="12.600" height="9.600" strokeWidth="1.300" /><path d="M3 8V5l3 3zM11 3v3L8 3z" fill="currentColor" stroke="none" /></Svg>
        <Svg w={12} h={11}><path d="M0 1.500h13M0 5.500h13M0 9.500h13" strokeWidth="1.600" /></Svg>
      </StatusCell>
    </StatusTools>
  </CadStatus>
);

export default function App() {
  return (
    <>
      <GlobalStyle />
      <Desktop>
        <ReadmeWindow />
        <ProjectWindow />
        <CadWindow>
          <TitleBar />
          <MenuBar>
            {cadMenus.map((m) => <button key={m}>{m}</button>)}
            <DocControls><Svg w={18} h={10}><path d="M0 6.500h7" stroke="#222" strokeWidth="2" /><path d="M11 3h6v6h-6zM13 3V1h5" stroke="#222" /></Svg></DocControls>
          </MenuBar>
          <FileTabs>
            <FileTab>开始</FileTab>
            <FileTab $active>不正经算法* <Svg w={7} h={7}><path d="M0 0l7 7M7 0L0 7" stroke="#333" strokeWidth="1.500" /></Svg></FileTab>
            <AddTab aria-label="New drawing"><Plus /></AddTab>
          </FileTabs>
          <Properties />
          <Workspace>
            <SidePanel $width={21} $inset={0}><Tools items={drawTools} height={315} /></SidePanel>
            <Drawing />
            <SidePanel $width={18} $inset={2}><Tools items={modifyTools} height={285} /></SidePanel>
          </Workspace>
          <StatusBar />
        </CadWindow>
        <RecorderBadge>35</RecorderBadge>
      </Desktop>
    </>
  );
}
